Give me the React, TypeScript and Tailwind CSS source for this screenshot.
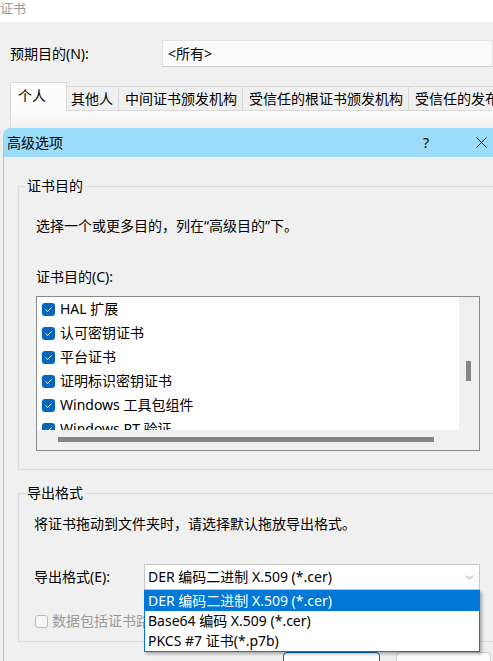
import { ChevronDown } from 'lucide-react';

const purposes = ['HAL 扩展', '认可密钥证书', '平台证书', '证明标识密钥证书', 'Windows 工具包组件', 'Windows RT 验证'];

const formats = ['DER 编码二进制 X.509 (*.cer)', 'Base64 编码 X.509 (*.cer)', 'PKCS #7 证书(*.p7b)'];

function CheckedBox() {
  return (
    <span className="w-[13px] h-[13px] shrink-0 rounded-[3px] bg-[#0067c0] flex items-center justify-center">
      <svg width="13" height="13" viewBox="0 0 13 13">
        <path d="M3.6 6.6 L5.6 8.6 L9.4 4.6" fill="none" stroke="white" strokeWidth="1" />
      </svg>
    </span>
  );
}

export default function App() {
  return (
    <div className="relative w-[493px] h-[661px] overflow-hidden bg-[#f0f0f0] text-black text-[14px] leading-[20px] font-['Noto_Sans','Noto_Sans_CJK_SC',sans-serif]">
      {/* fenêtre principale (derrière) */}
      <div className="h-[22px] bg-white text-[13px] leading-[17px] text-[#9a9a9a]">证书</div>

      <div className="mt-[18px] flex items-center">
        <span className="pl-[10px] w-[162px]">预期目的(N):</span>
        <div className="flex-1 h-[27px] bg-[#fbfbfb] border border-[#e3e3e3] border-b-[#cdcdcd] flex items-center pl-[5px]">
          &lt;所有&gt;
        </div>
      </div>

      <div className="mt-[15px] flex items-end pl-[10px]">
        <div className="relative z-10 -mb-px w-[57px] h-[29px] bg-[#fcfcfc] border border-b-0 border-[#d9d9d9] pl-[7px] pt-[3px]">个人</div>
        <div className="w-[52px] h-[24px] border-t border-r border-[#d9d9d9] pl-[4px] pt-[2px]">其他人</div>
        <div className="w-[124px] h-[24px] border-t border-r border-[#d9d9d9] pl-[6px] pt-[2px]">中间证书颁发机构</div>
        <div className="w-[166px] h-[24px] border-t border-r border-[#d9d9d9] pl-[6px] pt-[2px]">受信任的根证书颁发机构</div>
        <div className="flex-1 h-[24px] border-t border-[#d9d9d9] pl-[6px] pt-[2px] whitespace-nowrap overflow-hidden">受信任的发布者</div>
      </div>
      <div className="ml-[10px] h-[40px] border-l border-t border-[#d9d9d9] bg-gradient-to-b from-[#fbfbfb] to-[#e6e6e6]" />

      {/* boîte de dialogue "高级选项" */}
      <div className="absolute left-[3px] top-[128px] w-[501px] h-[560px] overflow-hidden rounded-tl-[8px] border-l border-[#8fd2f3] bg-[#f0f0f0]">
        <div className="h-[29px] bg-[#9bdcfa] flex items-center pl-[3px]">
          <span>高级选项</span>
          <span className="ml-auto mr-[9px] w-[46px] text-center">?</span>
          <span className="w-[46px] flex justify-center">
            <svg width="11" height="11" viewBox="0 0 11 11">
              <path d="M0.5 0.5 L10.5 10.5 M10.5 0.5 L0.5 10.5" stroke="#1a1a1a" strokeWidth="1" />
            </svg>
          </span>
        </div>

        <fieldset className="ml-[14px] mt-[19px] w-[490px] border border-[#dcdcdc] px-[6px] pb-[18px]">
          <legend className="px-[2px]">证书目的</legend>
          <div className="ml-[11px] mt-[20px]">选择一个或更多目的，列在“高级目的”下。</div>
          <div className="ml-[11px] mt-[31px]">证书目的(C):</div>
          <div className="ml-[11px] mt-[9px] w-[444px] h-[155px] border border-[#8a8a8a] bg-white flex flex-col">
            <div className="flex h-[133px]">
              <div className="flex-1 overflow-hidden">
                {purposes.map((p) => (
                  <div key={p} className="h-[24px] flex items-center gap-[5px] pl-[5px] whitespace-nowrap">
                    <CheckedBox />
                    <span>{p}</span>
                  </div>
                ))}
              </div>
              <div className="w-[20px] bg-[#f0f0f0] pt-[64px] pl-[7px]">
                <div className="w-[5px] h-[20px] bg-[#858585]" />
              </div>
            </div>
            <div className="flex-1 flex bg-[#f0f0f0]">
              <div className="w-[422px] pt-[7px] pl-[21px]">
                <div className="w-[376px] h-[5px] bg-[#858585]" />
              </div>
            </div>
          </div>
        </fieldset>

        <fieldset className="ml-[14px] mt-[13px] w-[490px] border border-[#dcdcdc] px-[6px] pb-[10px]">
          <legend className="px-[2px]">导出格式</legend>
          <div className="ml-[9px] mt-[11px]">将证书拖动到文件夹时，请选择默认拖放导出格式。</div>
          <div className="ml-[9px] mt-[30px] flex items-center">
            <span className="w-[110px]">导出格式(E):</span>
            <div className="relative">
              <div className="w-[336px] h-[26px] bg-white border border-[#c6c6c6] flex items-center pl-[3px]">
                <span className="flex-1">{formats[0]}</span>
                <ChevronDown size={13} strokeWidth={1.2} className="mr-[3px] text-[#606060]" />
              </div>
              <div className="absolute left-0 top-full z-20 w-[336px] border border-[#0078d7] bg-white shadow-[2px_2px_3px_rgba(0,0,0,0.3)]">
                {formats.map((f, i) => (
                  <div
                    key={f}
                    className={i === 0 ? 'h-[20px] pl-[3px] bg-[#0078d7] text-white' : 'h-[20px] pl-[3px]'}
                  >
                    {f}
                  </div>
                ))}
              </div>
            </div>
          </div>
          <div className="ml-[10px] mt-[21px] flex items-center gap-[4px] text-[#9a9a9a] whitespace-nowrap">
            <span className="w-[13px] h-[13px] rounded-[3px] border border-[#bcbcbc] bg-[#f7f7f7]" />
            <span>数据包括证书路径中的所有证书(如果可能)</span>
          </div>
        </fieldset>

        <div className="mt-[10px] ml-[279px] flex gap-[16px]">
          <div className="w-[97px] h-[26px] rounded-[4px] border border-[#0067c0] bg-[#fdfdfd]" />
          <div className="w-[95px] h-[26px] rounded-[4px] border border-[#cfcfcf] bg-[#fdfdfd]" />
        </div>
      </div>
    </div>
  );
}
